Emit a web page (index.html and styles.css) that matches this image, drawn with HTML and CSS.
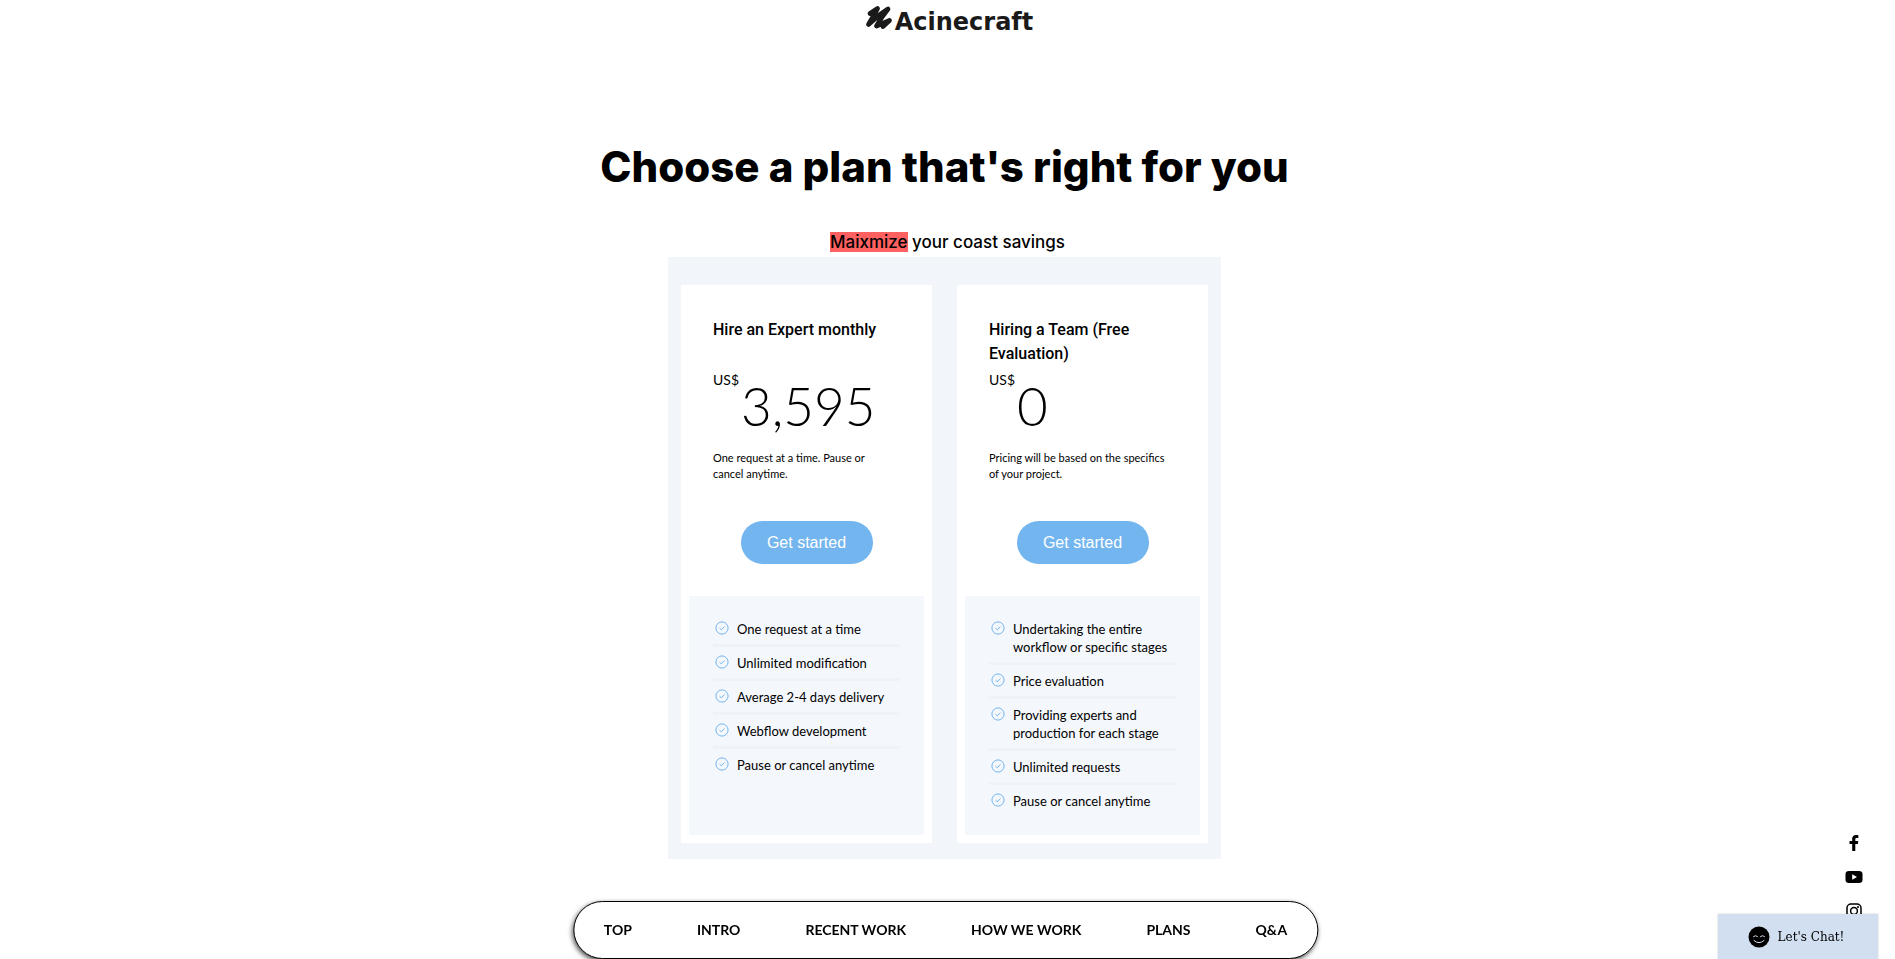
FILE: index.html
```
<!DOCTYPE html>
<html lang="en">
    <head>
        <meta charset="UTF-8" />
        <meta name="viewport" content="width=device-width, initial-scale=1.0" />
        <title>Acinecraft | Plans</title>
        <link rel="stylesheet" href="styles.css">
    </head>
    <body>
        <svg class="icon-defs" width="0" height="0" aria-hidden="true">
            <symbol id="check" viewBox="0 0 14 14">
                <circle cx="7" cy="7" r="6.1" fill="none" stroke="currentColor" />
                <path d="M4.6 7.3l1.7 1.5 3.2-3.2" fill="none" stroke="currentColor" />
            </symbol>
        </svg>

        <header class="header">
            <a class="logo" href="#top">
                <svg class="logo-mark" viewBox="0 0 28 25" aria-hidden="true">
                    <path d="M5 8.500L12.500 3.500 9 10 3.500 19.500 15 9.500 23 4 17 12 11.500 21 24.500 15.500 18 21.500" fill="none" stroke="currentColor" stroke-width="4.800" stroke-linecap="round" stroke-linejoin="round" />
                </svg>
                <span class="logo-text">Acinecraft</span>
            </a>
        </header>

        <main class="plans" id="plans">
            <h1 class="plans-title">Choose a plan that's right for you</h1>
            <p class="plans-subtitle"><mark>Maixmize</mark> your coast savings</p>

            <div class="plans-panel">
                <section class="plan-card">
                    <div class="plan-top">
                        <h2 class="plan-name">Hire an Expert monthly</h2>
                        <div class="plan-price">
                            <span class="currency">US$</span>
                            <span class="amount">3,595</span>
                        </div>
                        <p class="plan-description">One request at a time. Pause or cancel anytime.</p>
                        <button class="plan-button" type="button">Get started</button>
                    </div>
                    <ul class="plan-features">
                        <li><svg class="check"><use href="#check" /></svg><span>One request at a time</span></li>
                        <li><svg class="check"><use href="#check" /></svg><span>Unlimited modification</span></li>
                        <li><svg class="check"><use href="#check" /></svg><span>Average 2-4 days delivery</span></li>
                        <li><svg class="check"><use href="#check" /></svg><span>Webflow development</span></li>
                        <li><svg class="check"><use href="#check" /></svg><span>Pause or cancel anytime</span></li>
                    </ul>
                </section>

                <section class="plan-card">
                    <div class="plan-top">
                        <h2 class="plan-name">Hiring a Team (Free Evaluation)</h2>
                        <div class="plan-price">
                            <span class="currency">US$</span>
                            <span class="amount">0</span>
                        </div>
                        <p class="plan-description">Pricing will be based on the specifics of your project.</p>
                        <button class="plan-button" type="button">Get started</button>
                    </div>
                    <ul class="plan-features">
                        <li><svg class="check"><use href="#check" /></svg><span>Undertaking the entire workflow or specific stages</span></li>
                        <li><svg class="check"><use href="#check" /></svg><span>Price evaluation</span></li>
                        <li><svg class="check"><use href="#check" /></svg><span>Providing experts and production for each stage</span></li>
                        <li><svg class="check"><use href="#check" /></svg><span>Unlimited requests</span></li>
                        <li><svg class="check"><use href="#check" /></svg><span>Pause or cancel anytime</span></li>
                    </ul>
                </section>
            </div>
        </main>

        <nav class="bottom-nav">
            <a href="#top">TOP</a>
            <a href="#intro">INTRO</a>
            <a href="#work">RECENT WORK</a>
            <a href="#how">HOW WE WORK</a>
            <a href="#plans">PLANS</a>
            <a href="#qa">Q&amp;A</a>
        </nav>

        <div class="social">
            <a href="#facebook" aria-label="Facebook">
                <svg viewBox="0 0 18 18"><path d="M7.200 17V10H4.500V7h2.700V4.800C7.200 2.300 8.700 1 11 1h2.300v2.900h-1.600c-1 0-1.400.5-1.400 1.300V7h3l-.5 3h-2.500v7z" /></svg>
            </a>
            <a href="#youtube" aria-label="YouTube">
                <svg viewBox="0 0 18 18"><path fill-rule="evenodd" d="M4 3h10q3.500 0 3.500 3v6q0 3-3.500 3H4q-3.500 0-3.500-3V6q0-3 3.500-3zM7.200 6.300v5.400L12 9z" /></svg>
            </a>
            <a href="#instagram" aria-label="Instagram">
                <svg viewBox="0 0 18 18">
                    <rect x="2" y="2" width="14" height="14" rx="4" fill="none" stroke="currentColor" stroke-width="1.500" />
                    <circle cx="9" cy="9" r="3.400" fill="none" stroke="currentColor" stroke-width="1.500" />
                    <circle cx="13" cy="5" r="1" />
                </svg>
            </a>
        </div>

        <button class="chat-button" type="button">
            <svg viewBox="0 0 22 22" aria-hidden="true">
                <circle cx="11" cy="11" r="10.500" />
                <path d="M5.500 10.500q2-1.800 4 0M12.500 10.500q2-1.800 4 0M6 14.500q5 4.500 10 0" fill="none" stroke="#d2dff0" stroke-linecap="round" />
            </svg>
            <span>Let's Chat!</span>
        </button>
    </body>
</html>
```
FILE: styles.css
```
:root {
    --accent-color: #73b5ee;
    --panel-color: #f2f6fb;
    --features-color: #f4f7fc;
    --divider-color: #eff2f7;
    --chat-color: #d2dff0;
}

* {
    box-sizing: border-box;
}

body {
    margin: 0;
    font-family: Lato, sans-serif;
    color: #000;
    background-color: #fff;
}

h1,
h2,
p,
ul {
    margin: 0;
    padding: 0;
}

a {
    color: inherit;
    text-decoration: none;
}

.icon-defs {
    display: block;
}

.header {
    display: flex;
    justify-content: center;
    height: 140px;
    padding: 5px 0 0 3px;
}

.logo {
    display: flex;
    align-items: flex-start;
    gap: 2px;
    color: #1a1a1a;
}

.logo-mark {
    width: 28px;
    height: 25px;
}

.logo-text {
    font-family: "DejaVu Sans", sans-serif;
    font-size: 24px;
    font-weight: bold;
    line-height: 34px;
}

.plans {
    display: flex;
    flex-direction: column;
    align-items: center;
    padding-right: 6px;
}

.plans-title {
    font-family: Inter, sans-serif;
    font-size: 42px;
    font-weight: 800;
    line-height: 54px;
}

.plans-subtitle {
    margin-top: 38px;
    padding-left: 6px;
    font-family: Inter, sans-serif;
    font-size: 17px;
    font-weight: 500;
    line-height: 20px;
}

.plans-subtitle mark {
    display: inline-block;
    color: inherit;
    background-color: #ff6161;
}

.plans-panel {
    display: grid;
    grid-template-columns: 1fr 1fr;
    gap: 25px;
    width: 100%;
    max-width: 553px;
    margin-top: 5px;
    padding: 28px 13px 16px;
    background-color: var(--panel-color);
}

.plan-card {
    display: flex;
    flex-direction: column;
    padding: 8px;
    background-color: #fff;
}

.plan-top {
    display: flex;
    flex-direction: column;
    padding: 25px 24px 32px;
}

.plan-name {
    min-height: 48px;
    font-family: Roboto, sans-serif;
    font-size: 16px;
    font-weight: 500;
    line-height: 24px;
}

.plan-price {
    display: flex;
    gap: 2px;
    margin-top: 4px;
}

.currency {
    font-size: 14px;
    line-height: 20px;
}

.amount {
    font-size: 53px;
    font-weight: 300;
    line-height: 72px;
}

.plan-description {
    margin-top: 8px;
    padding-right: 4px;
    font-size: 11px;
    line-height: 16px;
}

.plan-button {
    align-self: center;
    width: 132px;
    height: 43px;
    margin-top: 39px;
    border: none;
    border-radius: 22px;
    color: #fff;
    background-color: var(--accent-color);
    font-family: "Liberation Sans", Arial, sans-serif;
    font-size: 16px;
    cursor: pointer;
}

.plan-features {
    flex: 1;
    padding: 17px 24px 19px;
    list-style: none;
    background-color: var(--features-color);
    font-size: 13px;
    line-height: 18px;
}

.plan-features li {
    display: flex;
    gap: 8px;
    padding: 7px 0 6px 2px;
    border-bottom: 3px solid var(--divider-color);
}

.plan-features li:last-child {
    border-bottom: none;
}

.check {
    flex: none;
    width: 14px;
    height: 14px;
    margin-top: 1px;
    color: var(--accent-color);
}

.bottom-nav {
    position: fixed;
    bottom: 0;
    left: calc(50% - 2px);
    display: flex;
    gap: 65px;
    align-items: center;
    height: 58px;
    padding: 0 30px 2px;
    border: 1px solid #000;
    border-radius: 29px;
    background-color: #fff;
    box-shadow: -1px 2px 5px rgba(0, 0, 0, 0.7);
    font-size: 14px;
    font-weight: 700;
    white-space: nowrap;
    transform: translateX(-50%);
}

.social {
    position: fixed;
    right: 32px;
    bottom: 39px;
    display: flex;
    flex-direction: column;
    gap: 16px;
}

.social svg {
    display: block;
    width: 18px;
    height: 18px;
    fill: currentColor;
}

.chat-button {
    position: fixed;
    right: 17px;
    bottom: 0;
    display: flex;
    align-items: center;
    justify-content: center;
    gap: 8px;
    width: 160px;
    height: 45px;
    padding: 1px 4px 0 0;
    border: none;
    color: #000;
    background-color: var(--chat-color);
    box-shadow: 0 0 2px rgba(0, 0, 0, 0.2);
    font-family: "DejaVu Serif", serif;
    font-size: 12px;
    cursor: pointer;
}

.chat-button svg {
    width: 22px;
    height: 22px;
}
```
